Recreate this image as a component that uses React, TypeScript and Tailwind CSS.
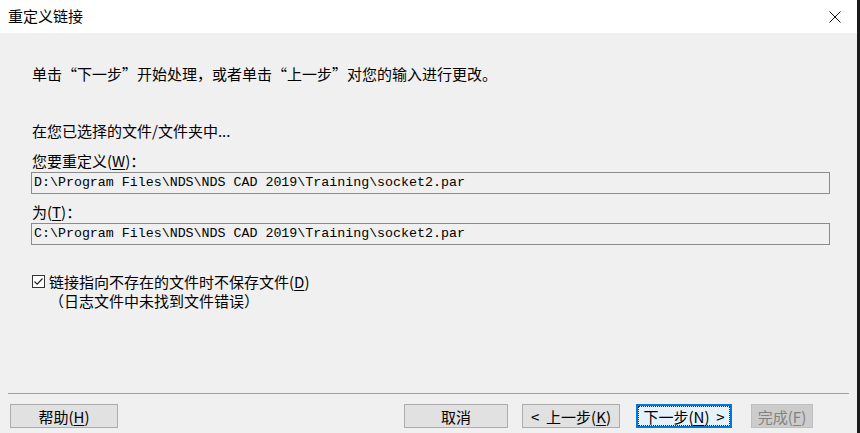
const cjk = { fontFamily: '"Noto Sans CJK SC", "Liberation Sans", sans-serif' };
const mono = { fontFamily: '"Liberation Mono", "Noto Sans CJK SC", monospace' };

function Key({ k }: { k: string }) {
  return (
    <span>
      (<span className="underline underline-offset-2">{k}</span>)
    </span>
  );
}

function Btn({
  children,
  className = "",
  focused = false,
  disabled = false,
}: {
  children: React.ReactNode;
  className?: string;
  focused?: boolean;
  disabled?: boolean;
}) {
  const base = focused
    ? "border-2 border-[#0078d7] bg-[#e5f1fb] text-black"
    : disabled
      ? "border border-[#bfbfbf] bg-[#cccccc] text-[#838383]"
      : "border border-[#adadad] bg-[#e1e1e1] text-black";
  return (
    <button className={`flex h-[24px] items-center justify-center text-[15px] leading-none ${base} ${className}`}>
      {focused ? (
        <span className="flex h-full w-full items-center justify-center border border-dotted border-[#222]">
          {children}
        </span>
      ) : (
        children
      )}
    </button>
  );
}

export default function App() {
  return (
    <div className="flex h-[433px] w-[860px] overflow-hidden text-black" style={cjk}>
      <div className="flex flex-1 flex-col">
        <div className="flex h-[33px] items-center justify-between bg-white pl-[8px] pr-[14px]">
          <span className="text-[15px]">重定义链接</span>
          <svg width="12" height="12" viewBox="0 0 12 12" className="mr-[2px]">
            <path d="M0.5 0.5 L11.5 11.5 M11.5 0.5 L0.5 11.5" stroke="#111" strokeWidth="1" />
          </svg>
        </div>

        <div className="flex flex-1 flex-col bg-[#f0f0f0]">
          <div className="flex flex-col pl-[31px] text-[15px]">
            <div className="mt-[31px] h-[20px] leading-[20px] pl-[1px]">
              单击“下一步”开始处理，或者单击“上一步”对您的输入进行更改。
            </div>
            <div className="mt-[37px] h-[20px] leading-[20px] pl-[1px]">在您已选择的文件/文件夹中...</div>
            <div className="mt-[10px] h-[20px] leading-[20px] pl-[1px]">
              您要重定义<Key k="W" />：
            </div>
            <div
              className="mt-[1px] flex h-[22px] w-[799px] items-center border border-[#8c8c8c] bg-[#f0f0f0] pl-[2px] text-[13.3px]"
              style={mono}
            >
              D:\Program Files\NDS\NDS CAD 2019\Training\socket2.par
            </div>
            <div className="mt-[8px] h-[20px] leading-[20px] pl-[1px]">
              为<Key k="T" />：
            </div>
            <div
              className="mt-[1px] flex h-[22px] w-[799px] items-center border border-[#8c8c8c] bg-[#f0f0f0] pl-[2px] text-[13.3px]"
              style={mono}
            >
              C:\Program Files\NDS\NDS CAD 2019\Training\socket2.par
            </div>

            <div className="mt-[27px] flex items-start gap-[4px] pl-[1px]">
              <div className="mt-[3px] flex h-[13px] w-[13px] items-center justify-center border border-[#333] bg-white">
                <svg width="11" height="11" viewBox="0 0 11 11">
                  <path d="M1.5 5.5 L4.2 8.2 L9.5 2.5" fill="none" stroke="#222" strokeWidth="1.2" />
                </svg>
              </div>
              <div className="flex flex-col">
                <div className="h-[19px] leading-[19px]">
                  链接指向不存在的文件时不保存文件<Key k="D" />
                </div>
                <div className="h-[19px] leading-[19px]">（日志文件中未找到文件错误）</div>
              </div>
            </div>
          </div>

          <div className="flex-1" />

          <div className="mx-[8px] h-px bg-[#a0a0a0]" />
          <div className="mb-[5px] mt-[10px] flex items-center pl-[10px]">
            <Btn className="w-[108px]">
              帮助<Key k="H" />
            </Btn>
            <Btn className="ml-[286px] w-[104px]">取消</Btn>
            <Btn className="ml-[14px] w-[98px]">
              &lt;&nbsp;&nbsp;上一步<Key k="K" />
            </Btn>
            <Btn className="ml-[16px] w-[96px]" focused>
              下一步<Key k="N" />&nbsp;&nbsp;&gt;
            </Btn>
            <Btn className="ml-[19px] w-[62px]" disabled>
              完成<Key k="F" />
            </Btn>
          </div>
        </div>
      </div>
      <div className="w-[3px] bg-[#1a1a1a]" />
    </div>
  );
}
